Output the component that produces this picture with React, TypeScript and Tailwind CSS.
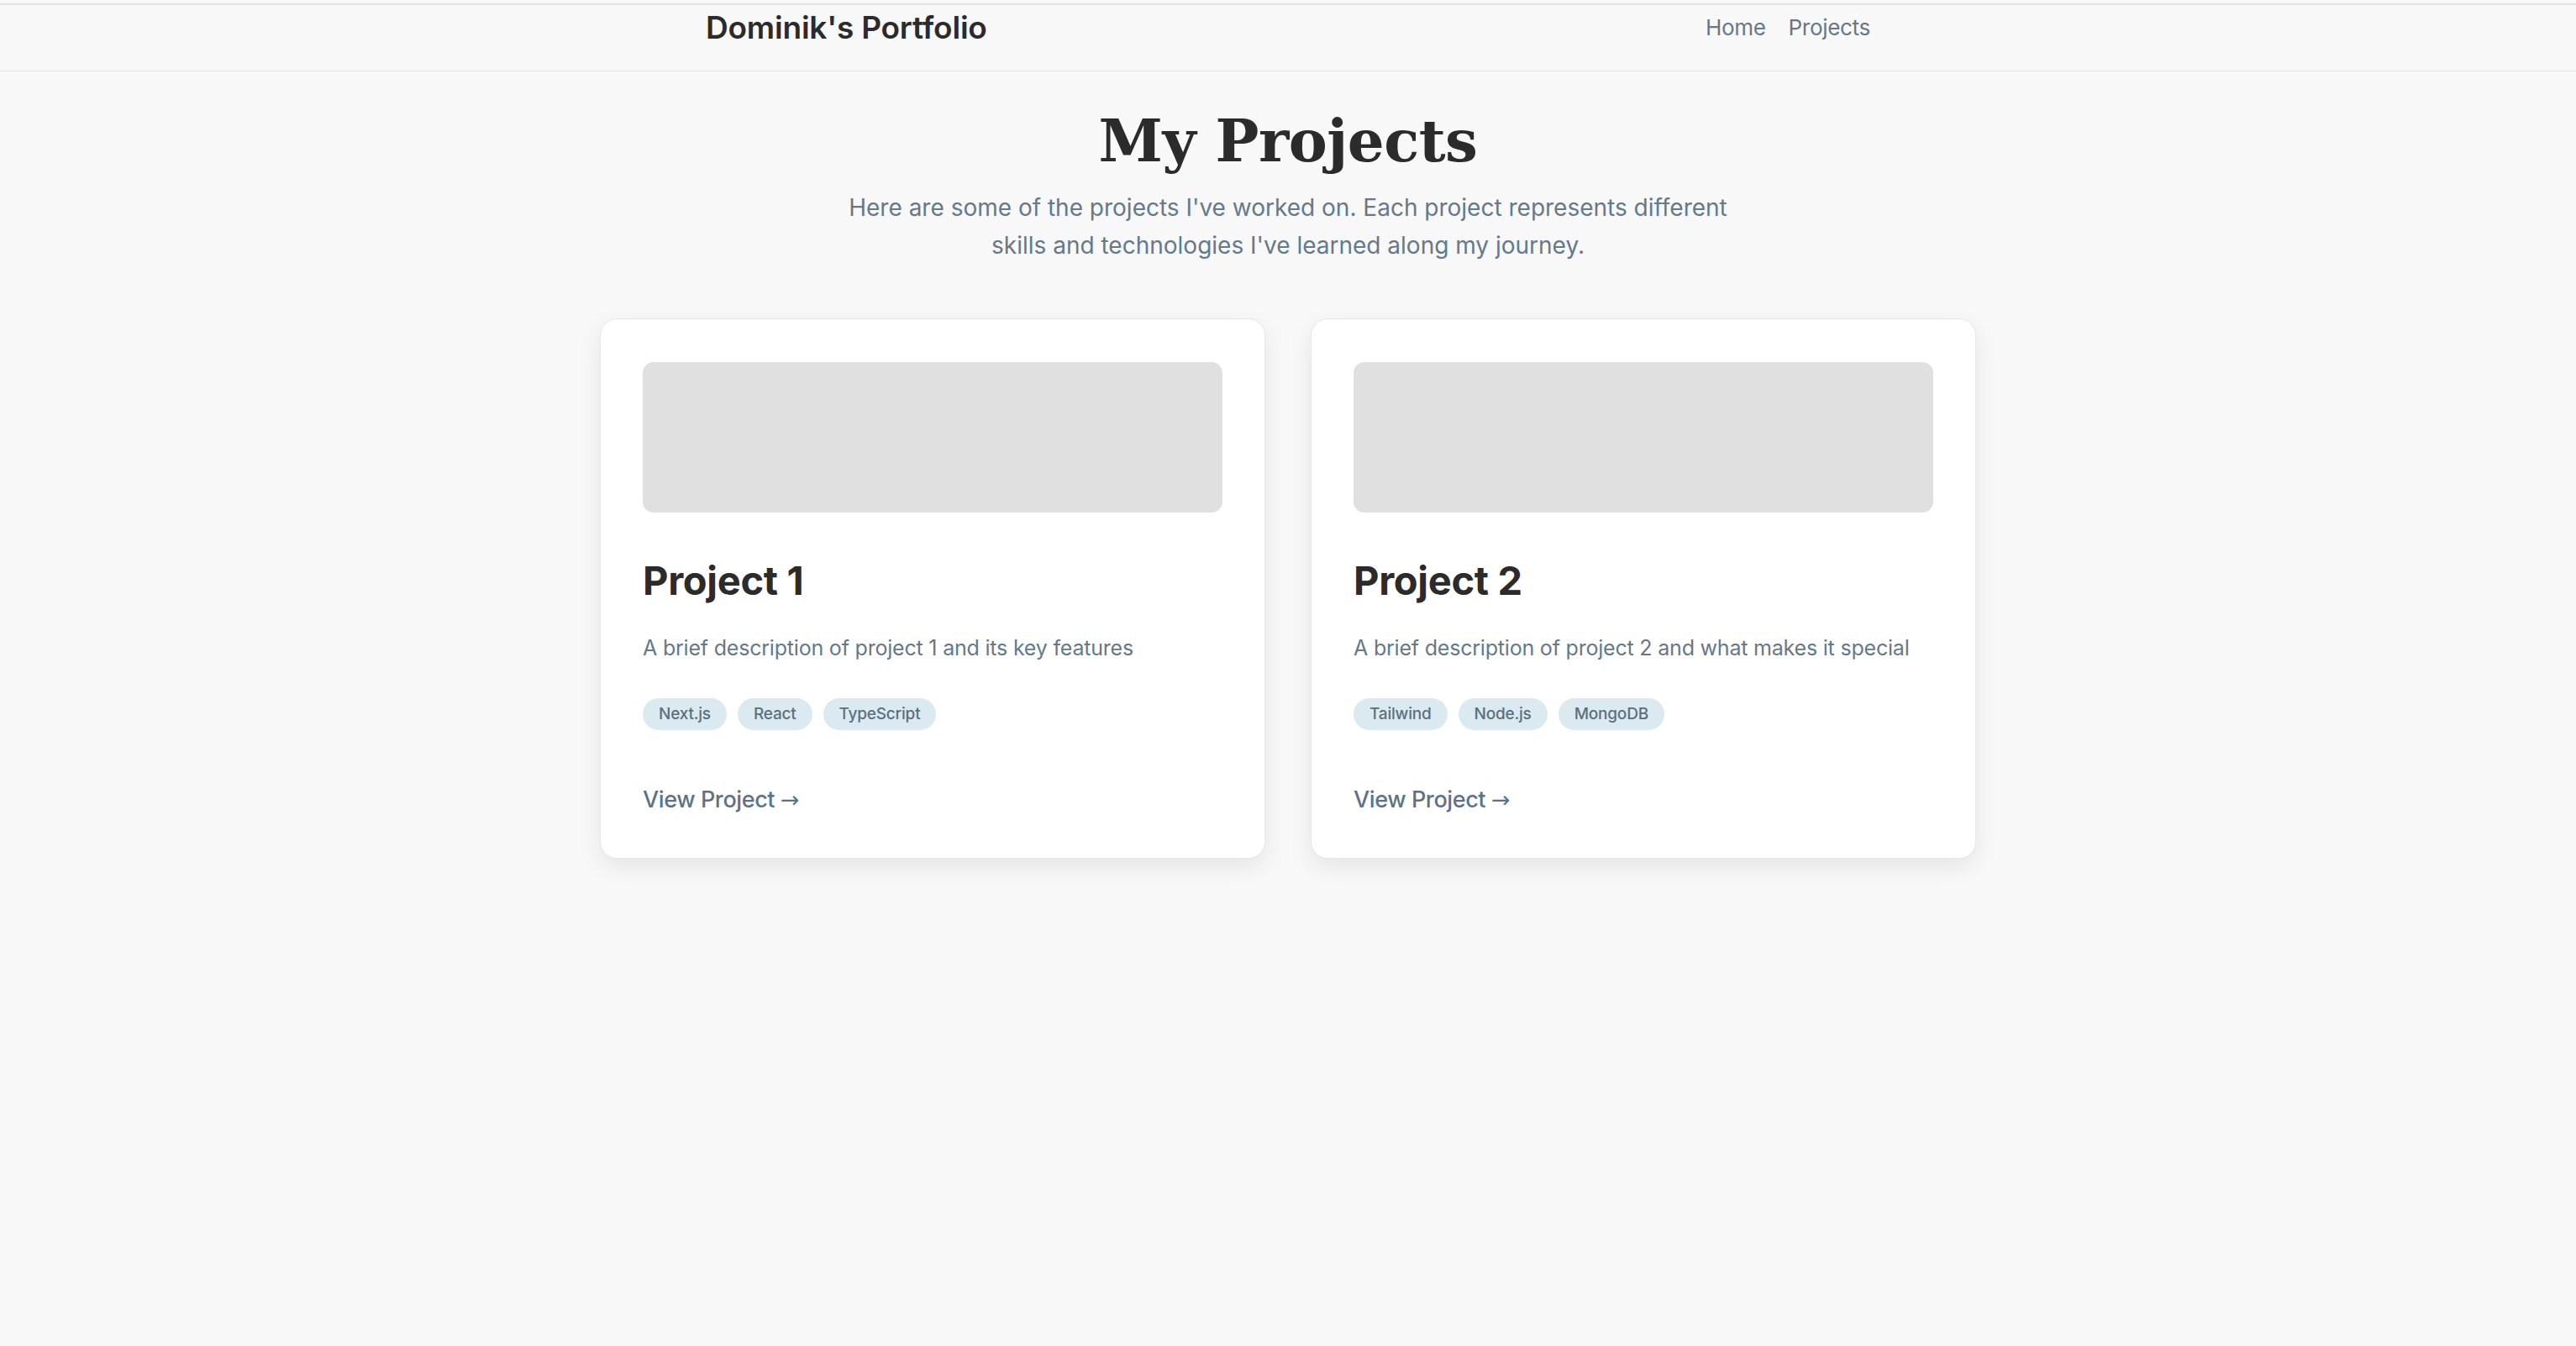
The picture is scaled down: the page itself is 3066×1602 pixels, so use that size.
const projects = [
  {
    title: "Project 1",
    description: "A brief description of project 1 and its key features",
    tags: ["Next.js", "React", "TypeScript"],
  },
  {
    title: "Project 2",
    description: "A brief description of project 2 and what makes it special",
    tags: ["Tailwind", "Node.js", "MongoDB"],
  },
];

function ProjectCard({ title, description, tags }: (typeof projects)[number]) {
  return (
    <div className="flex flex-col rounded-[20px] border border-[#e7e7e7] bg-white px-[50px] pt-[51px] pb-[49px] shadow-[0_10px_28px_rgba(0,0,0,0.08)]">
      <div className="h-[179px] w-full rounded-[13px] bg-[#e0e0e0]" />
      <h2 className="mt-[53px] text-[47px] leading-[1.2] font-bold tracking-[-0.3px] text-[#2b2b2b]">{title}</h2>
      <p className="mt-[34px] text-[25px] leading-[1.5] tracking-[-0.2px] whitespace-nowrap text-[#64798a]">
        {description}
      </p>
      <div className="mt-[40px] flex gap-[13px]">
        {tags.map((tag) => (
          <span
            key={tag}
            className="flex h-[38px] items-center rounded-full bg-[#dbeaf0] px-[19px] text-[19px] font-medium tracking-[-0.2px] text-[#5b6f7e]"
          >
            {tag}
          </span>
        ))}
      </div>
      <a href="#" className="mt-[63px] text-[27px] leading-[1.5] font-medium tracking-[-0.4px] text-[#5d7385]">
        View Project <span className="font-['DejaVu_Sans',sans-serif] font-normal">→</span>
      </a>
    </div>
  );
}

export default function App() {
  return (
    <div className="min-h-screen bg-[#f8f8f8] pt-[4px] font-['Inter',sans-serif]">
      <header className="h-[81px] border-t-2 border-b border-t-[#e3e3e6] border-b-[#e4e4e4] bg-[#f8f8f8]">
        <div className="mx-auto flex w-[1386px] items-start justify-between pt-[4px]">
          <span className="text-[37px] leading-[1.25] font-semibold tracking-[-0.2px] text-[#2b2b2b]">
            Dominik's Portfolio
          </span>
          <nav className="mt-[3px] flex gap-[27px] text-[26px] leading-[1.5] tracking-[-0.3px] text-[#64798a]">
            <a href="#">Home</a>
            <a href="#">Projects</a>
          </nav>
        </div>
      </header>

      <main className="pb-20">
        <section className="mt-[45px] flex flex-col items-center text-center">
          <h1 className="font-['DejaVu_Serif',serif] text-[69px] leading-[1.1] font-bold tracking-[-0.5px] text-[#2b2b2b]">
            My Projects
          </h1>
          <p className="mt-[19px] max-w-[1090px] text-[28px] leading-[45px] text-[#64798a]">
            Here are some of the projects I've worked on. Each project represents different skills and
            technologies I've learned along my journey.
          </p>
        </section>

        <section className="mx-auto mt-[64px] grid w-[1638px] grid-cols-2 gap-[54px]">
          {projects.map((p) => (
            <ProjectCard key={p.title} {...p} />
          ))}
        </section>
      </main>
    </div>
  );
}
